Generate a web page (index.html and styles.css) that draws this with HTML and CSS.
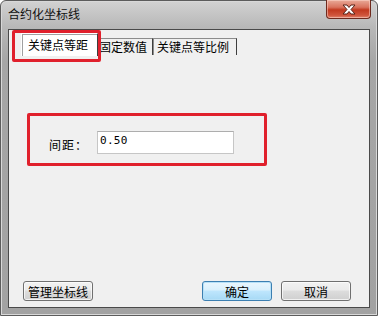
FILE: index.html
```html
<!DOCTYPE html>
<html lang="zh">
<head>
  <meta charset="UTF-8" />
  <title>合约化坐标线</title>
  <link rel="stylesheet" href="styles.css">
</head>
<body>
  <div class="window">
    <div class="titlebar">
      <span class="title">合约化坐标线</span>
      <div class="close">
        <svg width="16" height="11" viewBox="0 0 16 11">
          <path d="M2 1 H6 L8 3.5 L10 1 H14 L10 5.5 L14 10 H10 L8 7.5 L6 10 H2 L6 5.5 Z" fill="#fff" stroke="#5a2418" stroke-width="1"/>
        </svg>
      </div>
    </div>

    <div class="client">
      <div class="tabs">
        <div class="tab active">关键点等距</div>
        <div class="tab">固定数值</div>
        <div class="tab">关键点等比例</div>
      </div>
      <div class="mark mark-tab"></div>

      <div class="field-box">
        <label class="field-label">间距：</label>
        <div class="field-input">0.50</div>
      </div>

      <div class="footer">
        <button class="btn">管理坐标线</button>
        <span class="spacer"></span>
        <button class="btn btn-default">确定</button>
        <button class="btn">取消</button>
      </div>
    </div>
  </div>
</body>
</html>
```

FILE: styles.css
```css
body {
  margin: 0;
  width: 378px;
  height: 316px;
  overflow: hidden;
  background: #fff;
  font-family: "Noto Sans CJK SC", "DejaVu Sans", sans-serif;
  font-size: 12px;
  color: #000;
}
.window {
  box-sizing: border-box;
  width: 378px;
  height: 316px;
  border: 1px solid #5c5c5c;
  border-radius: 6px 6px 0 0;
  background: linear-gradient(to bottom, #d2d2d2, #b8b8b8 26px, #a6a6a6 60px, #a2a2a2);
  box-shadow: inset 0 0 0 1px #d8d8d8;
  display: flex;
  flex-direction: column;
}
.titlebar {
  height: 28px;
  display: flex;
  align-items: flex-start;
  position: relative;
}
.title {
  margin: 5px 0 0 7px;
  line-height: 16px;
  color: #111;
}
.close {
  position: absolute;
  top: -1px;
  right: 6px;
  width: 45px;
  height: 19px;
  box-sizing: border-box;
  border: 1px solid #6e2a1e;
  border-top: none;
  border-radius: 0 0 4px 4px;
  background: linear-gradient(to bottom, #e9aa98, #d9735e 40%, #c2391f 55%, #d0553c 85%, #e0866e);
  display: flex;
  align-items: center;
  justify-content: center;
  box-shadow: inset 0 0 0 1px rgba(255, 220, 210, 0.5);
}
.client {
  flex: 1;
  margin: 0 7px 7px 7px;
  border: 1px solid #4a4a4a;
  background: #f0f0f0;
  display: flex;
  flex-direction: column;
  position: relative;
}
.tabs {
  display: flex;
  align-items: flex-start;
  padding: 3px 0 0 12px;
  height: 23px;
}
.tab {
  box-sizing: border-box;
  height: 17px;
  margin-top: 5px;
  padding: 0 3px;
  border: 1px solid #8c8c8c;
  border-bottom: none;
  border-right-color: #3e3e3e;
  background: #f0f0f0;
  line-height: 16px;
  white-space: nowrap;
}
.tab.active {
  height: 23px;
  margin-top: 0;
  width: 77px;
  padding: 3px 0 0 6px;
  background: #fff;
  border-left-color: #fff;
  border-top-color: #fff;
  box-shadow: inset 1px 1px 0 #a0a0a0;
}
.tab:nth-child(2) {
  width: 55px;
  padding-left: 1px;
  border-left: none;
}
.tab:nth-child(3) {
  width: 84px;
}
.mark {
  position: absolute;
  border: 3px solid #e0202c;
  border-radius: 2px;
}
.mark-tab {
  left: 3px;
  top: 0;
  width: 83px;
  height: 26px;
}
.field-box {
  box-sizing: border-box;
  align-self: flex-start;
  margin: 57px 0 0 18px;
  width: 240px;
  height: 53px;
  border: 3px solid #e0202c;
  border-radius: 2px;
  display: flex;
  align-items: flex-start;
  padding: 15px 0 0 19px;
}
.field-label {
  width: 48px;
  line-height: 23px;
  margin-top: 2px;
  letter-spacing: 1px;
}
.field-input {
  box-sizing: border-box;
  width: 137px;
  height: 23px;
  background: #fff;
  border: 1px solid #c6c6c6;
  border-top-color: #adadad;
  padding: 2px 0 0 2px;
  font-family: "DejaVu Sans Mono", monospace;
  font-size: 11px;
  line-height: 13px;
  letter-spacing: 0.3px;
}
.footer {
  margin-top: auto;
  display: flex;
  align-items: center;
  padding: 0 18px 6px 14px;
  gap: 9px;
}
.spacer {
  flex: 1;
}
.btn {
  box-sizing: border-box;
  width: 70px;
  height: 20px;
  padding: 0;
  border: 1px solid #707070;
  border-radius: 3px;
  background: linear-gradient(to bottom, #f2f2f2, #ebebeb 45%, #dddddd 50%, #cfcfcf);
  font-family: "Noto Sans CJK SC", sans-serif;
  font-size: 12px;
  line-height: 17px;
  color: #000;
  box-shadow: inset 0 0 0 1px rgba(255, 255, 255, 0.7);
}
.btn-default {
  border-color: #3c7fb1;
  background: linear-gradient(to bottom, #eaf6fd, #d9f0fc 45%, #bee6fd 50%, #a7d9f5);
  box-shadow: inset 0 0 0 1px #b6e0f7;
}
```
